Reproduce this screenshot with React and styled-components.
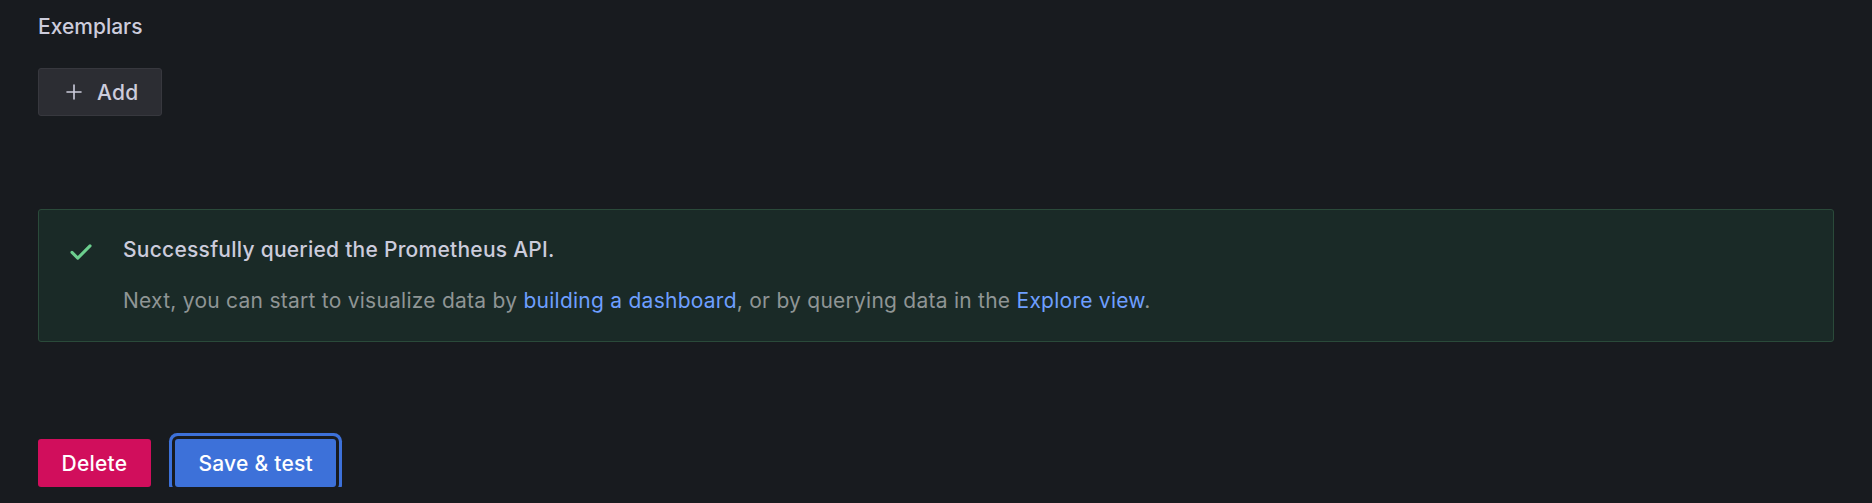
import styled, { createGlobalStyle } from 'styled-components'

const GlobalStyle = createGlobalStyle`
  body {
    margin: 0;
    background: #181b1f;
    font-family: Inter, "Noto Sans", sans-serif;
    color: #ccccdc;
  }
`

const Page = styled.div`
  padding: 11px 38px 0;
  display: flex;
  flex-direction: column;
  align-items: flex-start;
`

const Label = styled.div`
  font-size: 21px;
  font-weight: 500;
  line-height: 31.5px;
  color: #ccccdc;
`

const Button = styled.button`
  display: inline-flex;
  align-items: center;
  height: 48px;
  padding: 1px 22.5px 0;
  border-radius: 3px;
  font-family: inherit;
  font-size: 21px;
  font-weight: 500;
  letter-spacing: 0.25px;
  line-height: 1;
  cursor: pointer;
  border: 1px solid ${p => p.$border || 'transparent'};
  background: ${p => p.$bg};
  color: ${p => p.$color || '#ffffff'};
  box-shadow: ${p => (p.$focused ? '0 0 0 3px #181b1f, 0 0 0 6px #3d71d9' : 'none')};
  box-sizing: border-box;
`

const AddButton = styled(Button)`
  margin-top: 25px;
  padding-left: 23px;
  gap: 11px;
`

const Alert = styled.div`
  margin-top: 93px;
  align-self: stretch;
  display: flex;
  align-items: flex-start;
  gap: 24px;
  padding: 24px;
  border: 1px solid #2a4a3a;
  border-radius: 3px;
  background: #1a2a27;
`

const AlertIcon = styled.svg`
  width: 36px;
  height: 36px;
  flex-shrink: 0;
  fill: #6ccf8e;
`

const AlertBody = styled.div`
  display: flex;
  flex-direction: column;
  gap: 20px;
  font-size: 21px;
  line-height: 31.5px;
  letter-spacing: 0.25px;
`

const AlertTitle = styled.div`
  font-weight: 500;
  color: #ccccdc;
`

const AlertText = styled.div`
  color: #8f9595;
`

const Link = styled.a`
  color: #6e9fff;
  text-decoration: none;
`

const Actions = styled.div`
  margin-top: 97px;
  display: flex;
  gap: 24px;
`

function PlusIcon () {
  return (
    <svg width='24' height='24' viewBox='0 0 24 24' fill='#ccccdc'>
      <path d='M19,11.2H12.8V5a0.8,0.8,0,0,0-1.6,0v6.2H5a0.8,0.8,0,0,0,0,1.6h6.2V19a0.8,0.8,0,0,0,1.6,0V12.8H19a0.8,0.8,0,0,0,0-1.6Z' />
    </svg>
  )
}

export default function App () {
  return (
    <>
      <GlobalStyle />
      <Page>
        <Label>Exemplars</Label>
        <AddButton $bg='#2c2d33' $border='#37383e' $color='#ccccdc'>
          <PlusIcon />
          Add
        </AddButton>

        <Alert>
          <AlertIcon viewBox='0 0 24 24'>
            <path d='M18.71,7.21a1,1,0,0,0-1.42,0L9.84,14.67,6.71,11.53A1,1,0,1,0,5.290,13l3.84,3.84a1,1,0,0,0,1.42,0l8.16-8.16A1,1,0,0,0,18.71,7.21Z' />
          </AlertIcon>
          <AlertBody>
            <AlertTitle>Successfully queried the Prometheus API.</AlertTitle>
            <AlertText>
              Next, you can start to visualize data by <Link href='#'>building a dashboard</Link>, or by querying data in the <Link href='#'>Explore view</Link>.
            </AlertText>
          </AlertBody>
        </Alert>

        <Actions>
          <Button $bg='#d10e5c'>Delete</Button>
          <Button $bg='#3d71d9' $focused>Save &amp; test</Button>
        </Actions>
      </Page>
    </>
  )
}
